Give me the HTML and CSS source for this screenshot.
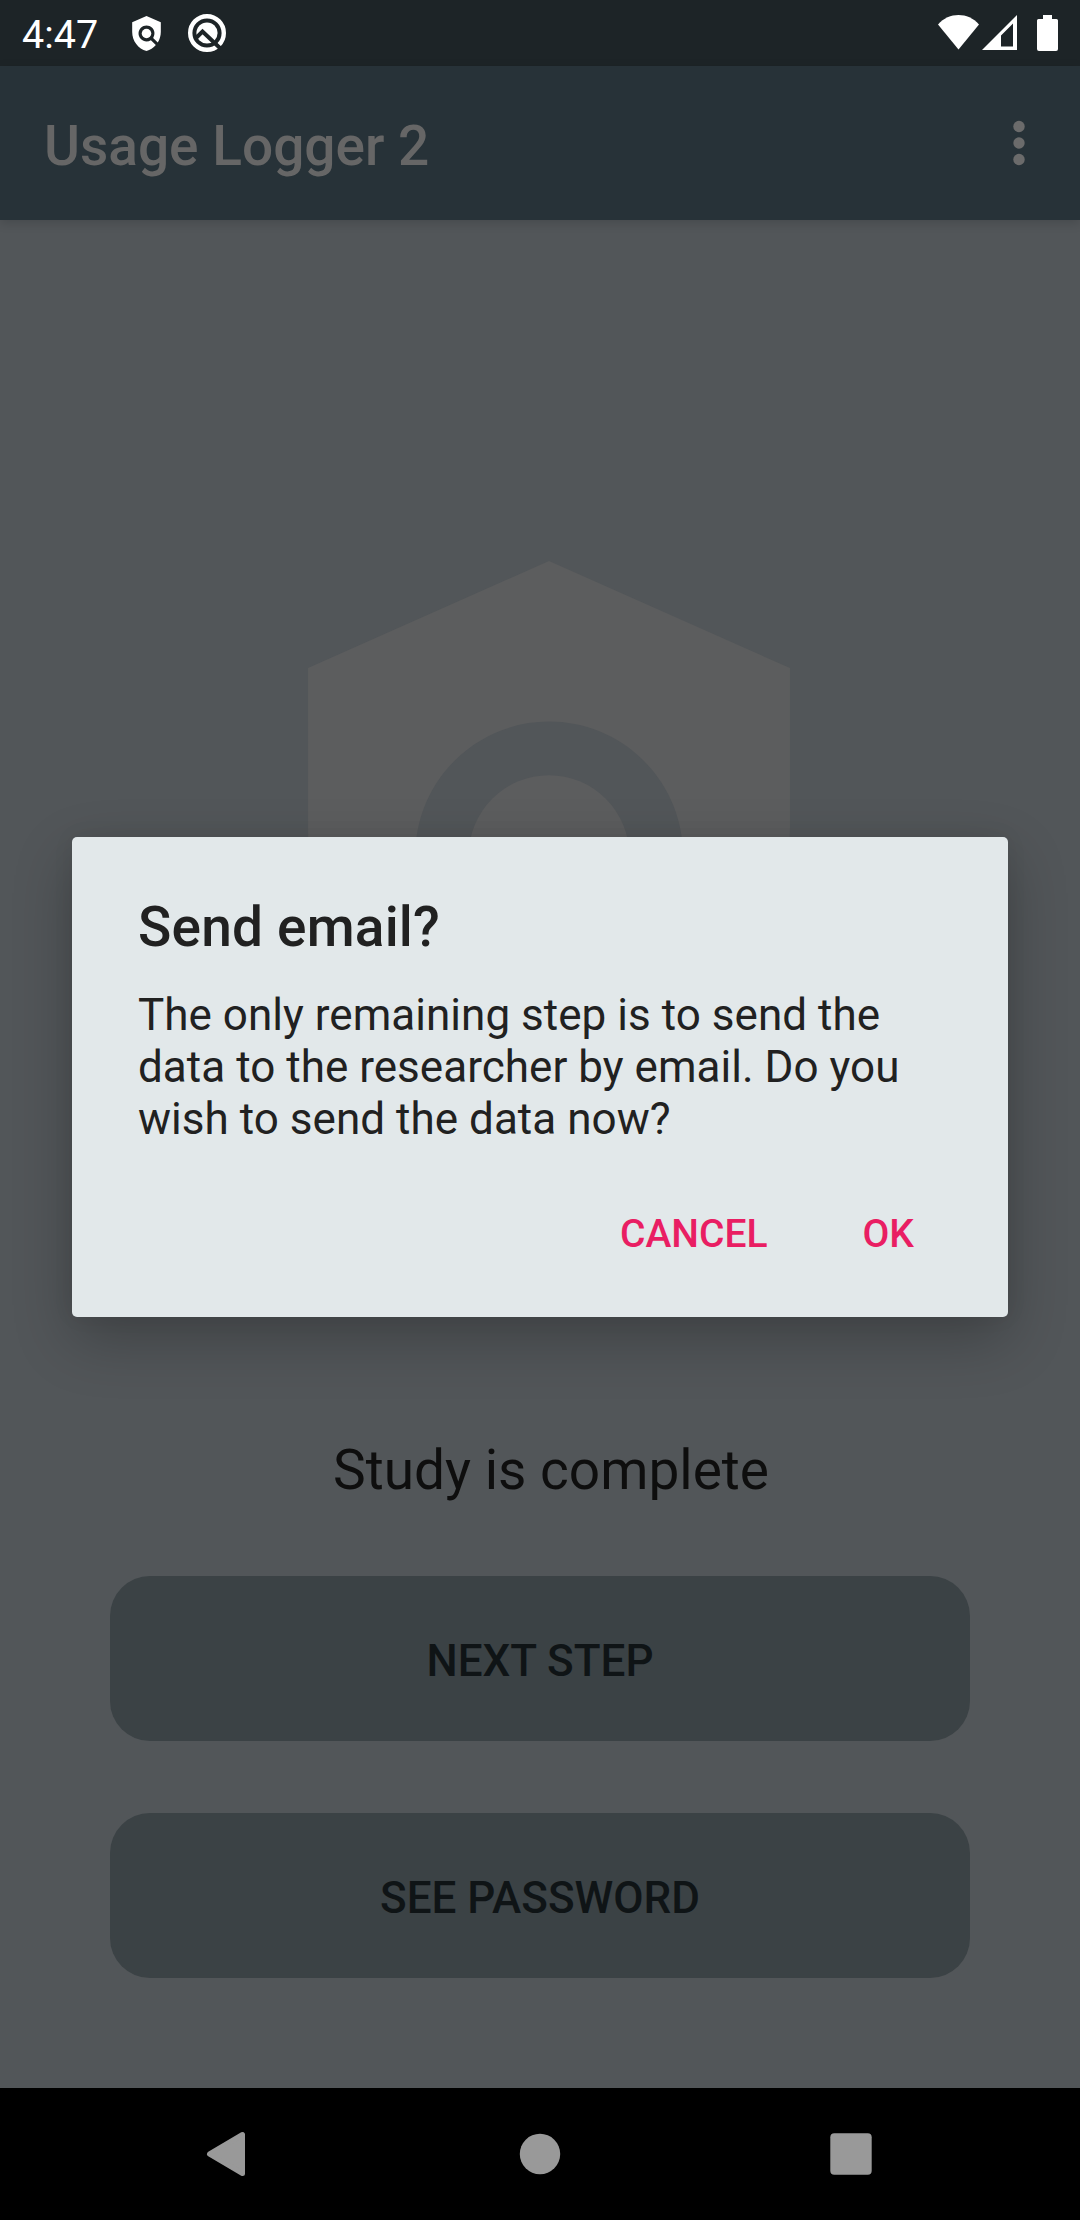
FILE: index.html
```html
<!DOCTYPE html>
<html lang="en">
<head>
<meta charset="utf-8">
<title>Usage Logger 2</title>
<link rel="stylesheet" href="styles.css">
</head>
<body>
<div class="screen">
  <header class="status-bar">
    <span class="clock">4:47</span>
    <svg class="icon-policy" viewBox="3 1 18 22" aria-hidden="true"><path d="M21,5l-9,-4 -9,4v6c0,5.55 3.84,10.74 9,12 2.3,-0.56 4.33,-1.9 5.88,-3.71l-3.12,-3.12c-1.94,1.29 -4.58,1.07 -6.29,-0.64 -1.95,-1.95 -1.95,-5.12 0,-7.07 1.95,-1.95 5.12,-1.95 7.07,0 1.71,1.71 1.92,4.35 0.64,6.29l2.9,2.9C20.29,15.69 21,13.38 21,11V5z"/><circle cx="12" cy="12" r="3"/></svg>
    <svg class="icon-q" viewBox="0 0 40 40" aria-hidden="true">
      <circle cx="20" cy="20" r="16.8" fill="none" stroke="#fff" stroke-width="4.4"/>
      <circle cx="20" cy="20" r="10.6"/>
      <path class="cut" d="M8 26 L15.500 18.500 L34 36"/>
    </svg>
    <span class="spacer"></span>
    <svg class="icon-wifi" viewBox="0 0 41 35" aria-hidden="true"><path d="M0 9.500C5.500 3 13 0 20.500 0S35.500 3 41 9.500L20.500 34.500z"/></svg>
    <svg class="icon-cell" viewBox="0 0 35 35" aria-hidden="true"><path fill-rule="evenodd" d="M35 0V35H0zM31 8.500L19 20.500V31.500H31z"/></svg>
    <svg class="icon-battery" viewBox="0 0 21 36" aria-hidden="true"><path d="M6 0H15V4H19.500Q21 4 21 5.500V34Q21 36 19 36H2Q0 36 0 34V5.500Q0 4 1.500 4H6z"/></svg>
  </header>
  <div class="app-bar">
    <h1 class="app-title">Usage Logger 2</h1>
    <svg class="icon-more" viewBox="0 0 12 46" aria-hidden="true"><circle cx="6" cy="6.500" r="5.700"/><circle cx="6" cy="23" r="5.700"/><circle cx="6" cy="39.500" r="5.700"/></svg>
  </div>
  <main class="content">
    <svg class="shield" viewBox="3 1 18 22" aria-hidden="true"><path d="M21,5l-9,-4 -9,4v6c0,5.55 3.84,10.74 9,12 2.3,-0.56 4.33,-1.9 5.88,-3.71l-3.12,-3.12c-1.94,1.29 -4.58,1.07 -6.29,-0.64 -1.95,-1.95 -1.95,-5.12 0,-7.07 1.95,-1.95 5.12,-1.95 7.07,0 1.71,1.71 1.92,4.35 0.64,6.29l2.9,2.9C20.29,15.69 21,13.38 21,11V5z"/><circle cx="12" cy="12" r="3"/></svg>
    <p class="study-state">Study is complete</p>
    <button class="action">NEXT STEP</button>
    <button class="action">SEE PASSWORD</button>
  </main>
  <nav class="nav-bar">
    <svg viewBox="0 0 46 46" aria-hidden="true"><path d="M36.500 3.500V42.500L3.500 23z" stroke-width="5" stroke-linejoin="round"/></svg>
    <svg viewBox="0 0 46 46" aria-hidden="true"><circle cx="23" cy="23" r="20.200"/></svg>
    <svg viewBox="0 0 46 46" aria-hidden="true"><rect x="2.300" y="2.300" width="41.400" height="41.400" rx="4"/></svg>
  </nav>
  <section class="dialog" role="dialog">
    <h2 class="dialog-title">Send email?</h2>
    <p class="dialog-text">The only remaining step is to send the<br>data to the researcher by email. Do you<br>wish to send the data now?</p>
    <div class="dialog-actions">
      <button class="text-button">CANCEL</button>
      <button class="text-button">OK</button>
    </div>
  </section>
</div>
</body>
</html>
```
FILE: styles.css
```css
* { box-sizing: border-box; }

body {
  margin: 0;
  font-family: Roboto, sans-serif;
}

h1, h2, p { margin: 0; }

button {
  border: 0;
  padding: 0;
  background: none;
  font-family: inherit;
  font-weight: 500;
}

svg { display: block; flex: none; }

.screen {
  position: relative;
  display: flex;
  flex-direction: column;
  width: 1080px;
  height: 2220px;
  overflow: hidden;
  background: #525659;
}

.status-bar {
  display: flex;
  height: 66px;
  padding: 0 22px;
  background: #1d2427;
  color: #fff;
  fill: #fff;
}

.clock {
  width: 110px;
  font-size: 39.5px;
  line-height: 69px;
}

.icon-policy { width: 29px; height: 35px; margin-top: 16px; }
.icon-q { width: 40px; height: 40px; margin: 13px 0 0 26px; }
.cut { fill: none; stroke: #1d2427; stroke-width: 4; }
.spacer { flex: 1; }
.icon-wifi { width: 41px; height: 35px; margin-top: 15px; }
.icon-cell { width: 35px; height: 35px; margin: 15px 0 0 3px; }
.icon-battery { width: 21px; height: 36px; margin: 15px 0 0 20px; }

.app-bar {
  position: relative;
  display: flex;
  justify-content: space-between;
  align-items: center;
  height: 154px;
  padding: 0 55px 0 44px;
  background: #273238;
  box-shadow: 0 3px 10px rgba(0, 0, 0, 0.15);
}

.app-title {
  padding-top: 6px;
  color: #666;
  font-size: 55px;
  font-weight: 500;
  line-height: 64px;
}

.icon-more { width: 12px; height: 46px; fill: #6b6b6b; }

.content {
  display: flex;
  flex: 1;
  flex-direction: column;
  align-items: center;
  padding: 341px 110px 0;
}

.shield { width: 482px; height: 589px; margin-left: 17px; fill: #5c5d5e; }

.study-state {
  margin-top: 288px;
  margin-left: 22px;
  color: #0e0e0e;
  font-size: 55px;
  line-height: 64px;
}

.action {
  width: 860px;
  height: 165px;
  margin-top: 72px;
  padding-top: 5px;
  border-radius: 40px;
  background: #3b4245;
  color: #0f1416;
  font-size: 44px;
}

.study-state + .action { margin-top: 74px; }

.nav-bar {
  display: flex;
  justify-content: space-between;
  height: 132px;
  padding: 43px 206px 0;
  background: #000;
  fill: #999;
  stroke: none;
}

.nav-bar svg { width: 46px; height: 46px; }
.nav-bar path { stroke: #999; }

.dialog {
  position: absolute;
  left: 72px;
  top: 837px;
  width: 936px;
  height: 480px;
  padding: 58px 66px 0;
  border-radius: 5px;
  background: #e2e8ea;
  color: #212121;
  box-shadow: 0 22px 60px rgba(0, 0, 0, 0.24), 0 0 22px rgba(0, 0, 0, 0.06);
}

.dialog-title {
  font-size: 55px;
  font-weight: 500;
  line-height: 64px;
  letter-spacing: 0.2px;
}

.dialog-text {
  margin-top: 30px;
  font-size: 44px;
  line-height: 52px;
  letter-spacing: 0.03px;
  white-space: nowrap;
}

.dialog-actions {
  display: flex;
  justify-content: flex-end;
  gap: 95px;
  margin-top: 66px;
  padding-right: 28px;
}

.text-button {
  color: #e91e63;
  font-size: 39px;
  line-height: 46px;
}
```
